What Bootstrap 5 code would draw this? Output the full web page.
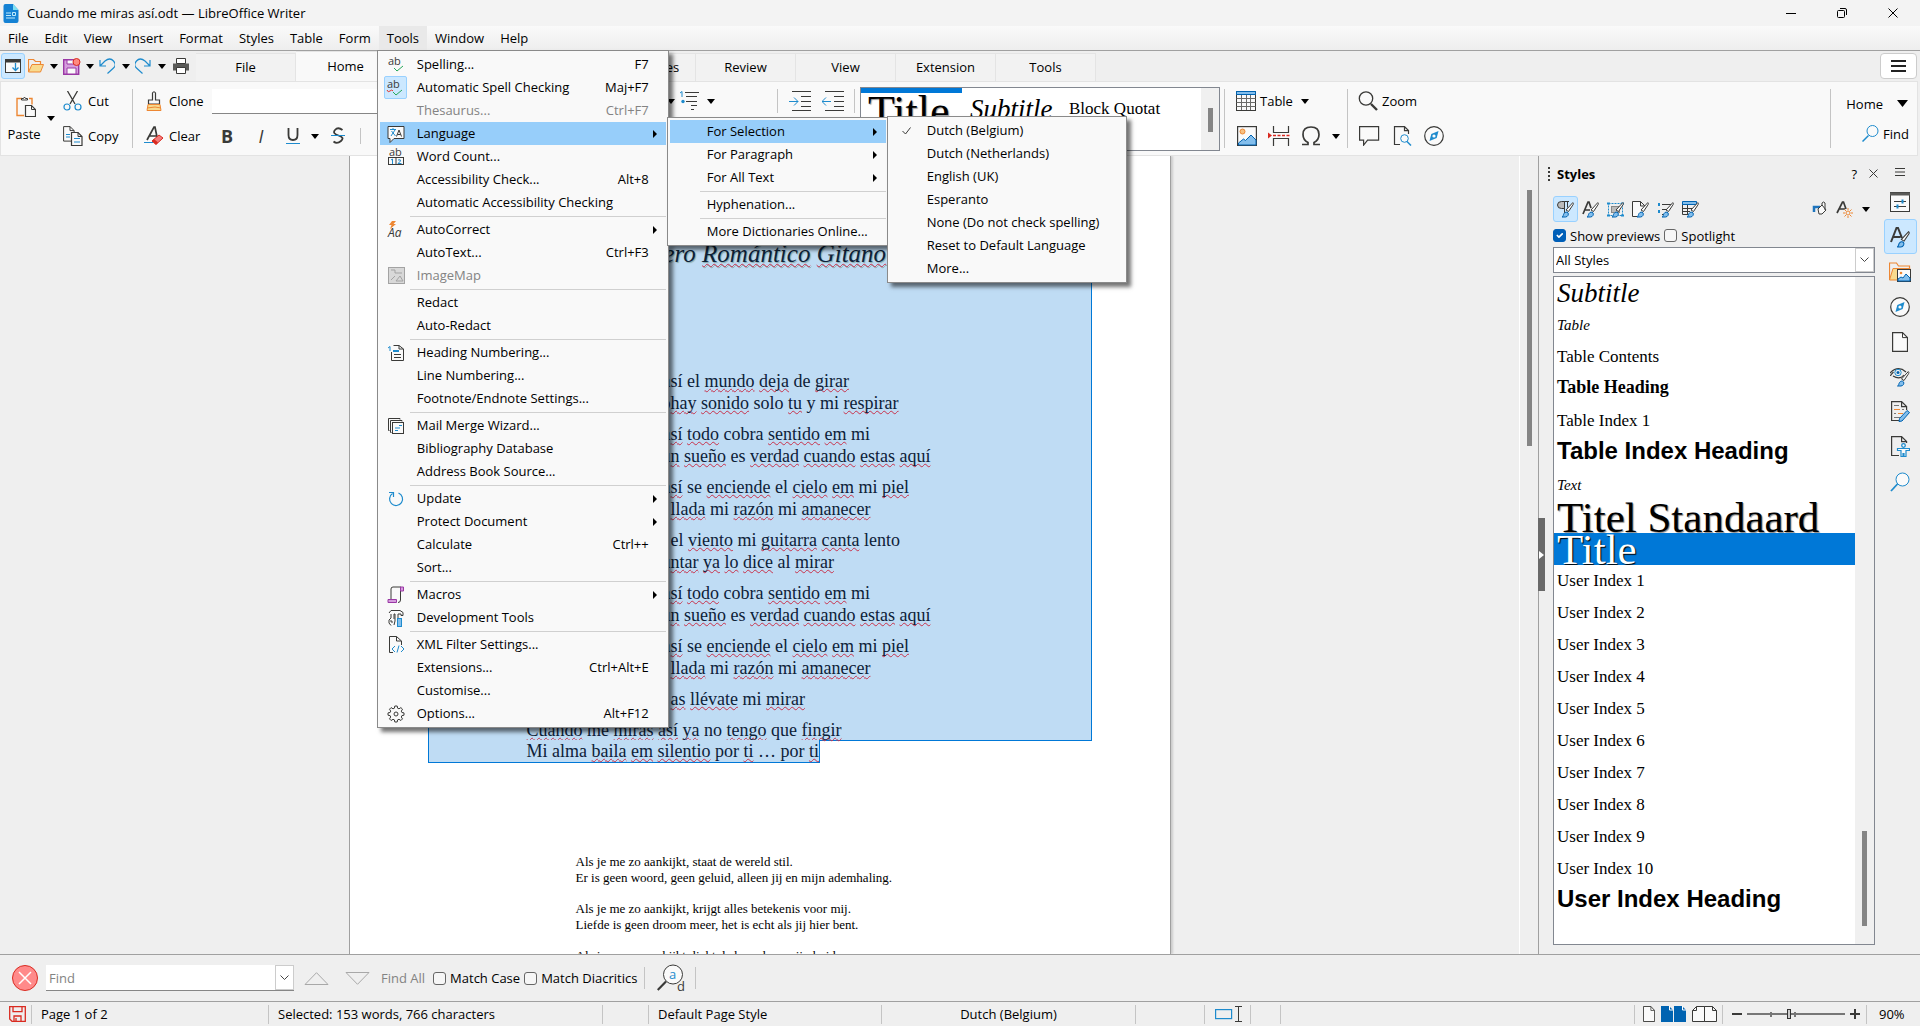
<!DOCTYPE html>
<html lang="en">
<head>
<meta charset="utf-8">
<meta name="viewport" content="width=device-width, initial-scale=1">
<title>Cuando me miras así.odt — LibreOffice Writer</title>
<link href="https://cdn.jsdelivr.net/npm/bootstrap@5.3.0/dist/css/bootstrap.min.css" rel="stylesheet">
<style>
:root{--ink:#3a3a38;--blue:#1e8bcd;--line:#a0a0a0;--face:#efefef;--panel:#f9f9f9;--hot:#cce8ff;--hotline:#99d1ff}
body{font-family:"Open Sans","Noto Sans",sans-serif;font-size:13px;line-height:18px;color:#000;background:var(--face);overflow:hidden}
svg{display:block;flex:none;fill:none;stroke:var(--ink)}
.b{stroke:var(--blue)}.o{stroke:#ed8733}.r{stroke:#d92a20}
.fb{fill:#83beec}.fw{fill:#fafafa}
.serif{font-family:"Liberation Serif",serif}
button{border:0;background:none;padding:0;color:inherit;font:inherit;display:inline-flex;align-items:center}
button:disabled{color:#838383}
.titlebar,.menubar,.tabbar,.ribbon,.findbar,.statusbar{flex-shrink:0}
/* title and menu bar */
.titlebar{height:26px;background:#f3f3f3;padding:0 2px 0 3px}
.titlebar .winbtn{width:51px;height:24px;justify-content:center}
.menubar{height:25px;background:linear-gradient(#fafafa,#eee);border-bottom:1px solid var(--line);z-index:20}
.menubar .nav-link{padding:0 8px;line-height:24px;color:#000}
.menubar .open{background:#e9e9e9}
.dropdown-menu{--bs-dropdown-bg:#f9f9f9;border:1px solid #8a8a8a;border-radius:0;padding:2px;margin:0;font-size:13px;color:#000;box-shadow:4px 4px 4px rgba(0,0,0,.55)}
.dropdown-item{height:23px;line-height:23px;padding:0 17px 0 4px;display:flex;align-items:center;color:#000}
.dropdown-item.hot,.dropdown-item.hot:hover{background:#97cefa}
.dropdown-item:disabled{color:#838383}
.dropdown-item .mi{width:25px;height:23px;margin-right:8px;display:flex;align-items:center;justify-content:center;flex:none}
.dropdown-item .mi.on{width:23px;margin-right:10px;background:var(--hot);border:1px solid var(--hotline);border-radius:2px}
.dropdown-item .key{margin-left:auto}
.dropdown-item .arr{margin-left:auto;margin-right:-8px}
.dropdown-divider{margin:2px 0 1px 30px;border-color:#d0d0d0;opacity:1}
.menu-tools{width:292px;left:-2px}
.menu-lang{width:222px;left:287px;top:-5px}
.menu-sel{width:240px;left:217px;top:-4px}
/* tabs */
.tabbar{height:30px;padding-right:3px}
.quick{width:196px;height:30px;padding-left:1px}
.quick button{height:26px;justify-content:center}
.pressed{background:var(--hot);border:1px solid var(--hotline);border-radius:3px}
.tabcell{width:100px;height:28px;padding-bottom:2px;justify-content:center;background:#f2f2f2;border:1px solid #e4e4e4;border-width:1px 1px 0 0}
.tabcell.on{background:var(--panel);height:30px}
.burger{width:37px;height:26px;justify-content:center;background:#fff;border:1px solid #ccc;border-radius:4px}
/* ribbon */
.ribbon{height:75px;background:var(--panel);border:1px solid #e3e3e3;margin-right:2px}
.grp{height:59px;display:flex;flex-direction:column;justify-content:space-between}
.grp>div{height:24px;display:flex;align-items:center}
.duo button{padding-left:3px;gap:5px}
.vbar{width:1px;background:#c4c4c4;flex:none;align-self:stretch}
.vbar.tall{height:59px;align-self:center}
.fontbox{width:190px;height:25px;border:0;border-bottom:1px solid #868686;border-radius:0;background:#fff;padding:0 4px}
.glyph{font-size:18px;width:16px;justify-content:center;color:var(--ink)}
.gallery{width:360px;height:64px;background:#fff;border:1px solid #828790}
.gallery button{display:flex;align-items:flex-start;height:62px;overflow:hidden;white-space:nowrap}
.gal-title{width:101px;border-top:5px solid #0078d7;font-size:44px;line-height:38px;text-shadow:1px 1px 1px #999;padding-left:7px}
.gal-sub{width:99px;font-size:27px;font-style:italic;line-height:42px;padding-left:8px}
.gal-quote{width:100px;font-size:17px;line-height:42px;padding-left:8px}
.gal-scroll{width:18px;background:#f0f0f0;padding:20px 0 0 7px}
.thumb{width:5px;background:#858585}
/* document */
.work{min-height:0;flex:1 1 0}
.page{width:822px;background:#fff;border:1px solid #a0a0a0;border-width:0 1px;box-shadow:2px 0 2px #ccc}
.sel-main{margin:0 78px;height:585px;background:#bfdcf4;border:1px solid #0078d7;border-top:0}
.sel-tail{margin:-1px 0 0 78px;background:#bfdcf4;border:1px solid #0078d7;border-top:0;width:fit-content;position:relative}
.verse{font-size:18px;line-height:22px;padding-left:98px;white-space:nowrap;color:#0d2138}
.verse p{margin:0 0 9px}
.verse p:last-child{margin:0}
.headline{font-size:25px;font-style:italic;line-height:30px;padding:83px 0 0 98px;white-space:nowrap;color:#0d2138;text-shadow:1px 1px 1px #8aa}
.cut{display:inline-flex;justify-content:flex-end;width:144px}
.headline .cut{width:148px}
.verse u,.headline u{text-decoration:underline wavy #c8324b 1px;text-underline-offset:1px;text-decoration-skip-ink:none}
.dutch{font-size:13px;line-height:16px;padding:91px 0 0 226px;white-space:nowrap}
.dutch p{margin:0 0 15px}
.docscroll{width:19px;border-left:1px solid #fff;padding:34px 0 0 7px}
/* sidebar */
.splitter{width:7px;border-left:1px solid var(--line)}
.splitter button{width:7px;height:73px;margin:362px 0 0 -1px;background:#696969;justify-content:center}
.deck{width:322px;margin:0 8px 9px 8px}
.deckhead{height:37px;padding-bottom:2px}
.deckbar{height:31px;padding-top:1px}
.deckbar button{width:25px;height:26px;justify-content:center}
.form-check{min-height:0;padding:0;margin:0;display:flex;align-items:center}
.form-check .form-check-input{width:13px;height:13px;margin:0 4px 0 0;border:1px solid #666;border-radius:3px;float:none;background-color:#f6f6f6}
.form-check .form-check-input:checked{background-color:#005fb8;border-color:#005fb8}
.stylefilter{height:26px;border:1px solid #828790;background:#fff}
.stylefilter select{appearance:none;border:0;background:none;font:inherit;padding:0 2px;width:100%;color:#000}
.dropbtn{width:19px;background:#fff;border:1px solid #ccc;display:flex;align-items:center;justify-content:center}
.stylelist{margin-top:3px;border:1px solid #828790;background:#fff}
.stylelist .list-group-item{height:32px;line-height:32px;border:0;padding:0 0 0 3px;font-size:17px;color:#000;background:none;overflow:hidden;white-space:nowrap}
.stylelist .s-sub{font-size:27px;font-style:italic}
.stylelist .s-it{font-size:15px;font-style:italic}
.stylelist .s-bold{font-size:18px;font-weight:bold;line-height:28px}
.stylelist .s-head{font-family:"Liberation Sans",sans-serif;font-size:24px;font-weight:bold;line-height:28px}
.stylelist .s-big{font-size:43px;line-height:33px;text-shadow:1px 1px 1px #888}
.stylelist .s-active{background:#0078d7;color:#fff;text-shadow:1px 1px 1px #000}
.liststrip{width:19px;background:#f0f0f0;padding:554px 0 0 7px}
.sidetabs{width:37px;padding-right:3px}
.sidetabs button{width:33px;height:35px;flex:none;justify-content:center}
.sidetabs button.first{height:28px;padding-top:4px}
/* find and status bars */
.findbar{height:47px;border-top:1px solid var(--line);padding-left:12px}
.findbox{width:248px;height:26px;background:#fff;border-bottom:1px solid #868686}
.findbox input{border:0;background:none;padding:0 3px;width:229px;font:inherit}
.findbox input::placeholder{color:#838383;opacity:1}
.findsep{width:1px;height:22px;background:#c4c4c4}
.statusbar{height:25px;border-top:1px solid var(--line)}
.cell{height:19px;border-right:1px solid #c4c4c4;padding-left:9px;display:flex;align-items:center;flex:none;white-space:nowrap}
.zoomer{width:98px;height:14px;margin:0 5px}
.zoomer input{appearance:none;width:98px;height:14px;margin:0;background:linear-gradient(#777,#777) 0 6px/100% 2px no-repeat,linear-gradient(#777,#777) 23px 5px/2px 5px no-repeat,linear-gradient(#777,#777) 47px 5px/2px 5px no-repeat;display:block}
.zoomer input::-webkit-slider-thumb{appearance:none;width:4px;height:10px;background:#ccc;border:1px solid #333}
</style>
</head>
<body class="vh-100 d-flex flex-column">
<svg width="0" height="0" class="position-absolute" aria-hidden="true">
  <symbol id="caret" viewBox="0 0 8 5"><path d="M0 0h8L4 5z" fill="#000" stroke="none"/></symbol>
  <symbol id="right" viewBox="0 0 4 8"><path d="M0 0l4 4-4 4z" fill="#000" stroke="none"/></symbol>
  <symbol id="brush" viewBox="0 0 12 16"><path d="M11.300 .6c.8.500.7 1.500 0 2.500L7 9.500 4.500 8z" fill="#fafafa" stroke="#3a3a38"/><path d="M.5 15c1.500-.5 1-2 2-3.500s3-2 4-.6-.2 4-2.500 4.100z" fill="#83beec" stroke="#0063b1"/></symbol>
  <symbol id="glass" viewBox="0 0 20 20"><circle cx="12.500" cy="7.500" r="6.500" stroke="#1e8bcd" fill="#fafafa"/><path d="M7.500 12L1 19" stroke="#1e8bcd" stroke-width="1.800"/></symbol>
  <symbol id="compass" viewBox="0 0 20 20"><circle cx="10" cy="10" r="9.300" fill="#fafafa" stroke="#3a3a38" stroke-width="1.200"/><path d="M14.500 5l-1.800 7-7.200 3 1.800-7z" fill="#1e8bcd" stroke="none"/><circle cx="10" cy="10" r="1.600" fill="#fafafa" stroke="none"/></symbol>
  <symbol id="sheet" viewBox="0 0 16 20"><path d="M.6.6h9.900l5 5v13.800H.6z" fill="#fafafa" stroke="#3a3a38" stroke-width="1.200"/><path d="M10.500.6v5h5" stroke="#3a3a38" fill="none"/></symbol>
  <symbol id="chev" viewBox="0 0 9 6"><path d="M.5.5l4 4 4-4" stroke="#444" fill="none"/></symbol>
</svg>

<header class="titlebar d-flex align-items-center">
  <svg width="16" height="19" viewBox="0 0 16 19"><path d="M2.500 0H10l5.500 6v11a2 2 0 0 1-2 2h-11a2 2 0 0 1-2-2V2a2 2 0 0 1 2-2z" fill="#1582d4" stroke="none"/><path d="M10 0l5.500 6H10z" fill="#7fe0f2" stroke="none"/><path d="M3 9h5M3 11.500h5M3 14h9" stroke="#bfe9fb"/><path d="M9.500 8.500h3v3h-3z" stroke="#bfe9fb"/></svg>
  <span class="ms-2">Cuando me miras así.odt — LibreOffice Writer</span>
  <div class="ms-auto d-flex">
    <button class="winbtn" aria-label="Minimize"><svg width="10" height="10"><path d="M0 5.500h10" stroke="#000"/></svg></button>
    <button class="winbtn" aria-label="Restore"><svg width="10" height="10"><rect x=".5" y="2.500" width="7" height="7" rx="1" stroke="#000"/><path d="M3 .5h5a1.500 1.500 0 0 1 1.500 1.500v5" stroke="#000"/></svg></button>
    <button class="winbtn" aria-label="Close"><svg width="10" height="10"><path d="M.5.5l9 9M9.500.5l-9 9" stroke="#000"/></svg></button>
  </div>
</header>

<nav class="menubar nav flex-nowrap position-relative">
  <a class="nav-link" href="#">File</a><a class="nav-link" href="#">Edit</a><a class="nav-link" href="#">View</a><a class="nav-link" href="#">Insert</a><a class="nav-link" href="#">Format</a><a class="nav-link" href="#">Styles</a><a class="nav-link" href="#">Table</a><a class="nav-link" href="#">Form</a>
  <div class="dropdown">
    <a class="nav-link open" href="#">Tools</a>
    <div class="dropdown-menu menu-tools show">
      <button class="dropdown-item"><span class="mi"><svg width="18" height="18"><text x="1" y="9" font-size="11" fill="#3a3a38" stroke="none">ab</text><path d="M7 12l3 3 6-5" stroke="#27a85a"/></svg></span>Spelling...<span class="key">F7</span></button>
      <button class="dropdown-item"><span class="mi on"><svg width="18" height="18"><text x="1" y="9" font-size="11" fill="#3a3a38" stroke="none">ab</text><path d="M7 13l3 3 6-5" stroke="#27a85a"/><path d="M1 11q1 3 3 1t3 0" stroke="#e0352b"/></svg></span>Automatic Spell Checking<span class="key">Maj+F7</span></button>
      <button class="dropdown-item" disabled><span class="mi"></span>Thesaurus...<span class="key">Ctrl+F7</span></button>
      <div class="position-relative">
        <button class="dropdown-item hot"><span class="mi"><svg width="18" height="18"><path d="M1 1.500h16v12H7l-4 4v-4H1z" class="fw"/><path d="M3 4.500h6M6 3v1.500M4 11l4-6M4.500 6l4 5" class="b"/><path d="M9.500 11.500l2.500-6.500 2.500 6.500M10.500 9.500h3"/></svg></span>Language<span class="arr"><svg width="4" height="8"><use href="#right"/></svg></span></button>
        <div class="dropdown-menu menu-lang show">
          <div class="position-relative">
            <button class="dropdown-item hot"><span class="mi"></span>For Selection<span class="arr"><svg width="4" height="8"><use href="#right"/></svg></span></button>
            <div class="dropdown-menu menu-sel show">
              <button class="dropdown-item"><span class="mi"><svg width="9" height="8"><path d="M.5 4l3 3L8.500.5"/></svg></span>Dutch (Belgium)</button>
              <button class="dropdown-item"><span class="mi"></span>Dutch (Netherlands)</button>
              <button class="dropdown-item"><span class="mi"></span>English (UK)</button>
              <button class="dropdown-item"><span class="mi"></span>Esperanto</button>
              <button class="dropdown-item"><span class="mi"></span>None (Do not check spelling)</button>
              <button class="dropdown-item"><span class="mi"></span>Reset to Default Language</button>
              <button class="dropdown-item"><span class="mi"></span>More...</button>
            </div>
          </div>
          <button class="dropdown-item"><span class="mi"></span>For Paragraph<span class="arr"><svg width="4" height="8"><use href="#right"/></svg></span></button>
          <button class="dropdown-item"><span class="mi"></span>For All Text<span class="arr"><svg width="4" height="8"><use href="#right"/></svg></span></button>
          <hr class="dropdown-divider">
          <button class="dropdown-item"><span class="mi"></span>Hyphenation...</button>
          <hr class="dropdown-divider">
          <button class="dropdown-item"><span class="mi"></span>More Dictionaries Online...</button>
        </div>
      </div>
      <button class="dropdown-item"><span class="mi"><svg width="18" height="18"><text x="2" y="8" font-size="11" fill="#3a3a38" stroke="none">ab</text><rect x="1.500" y="9.500" width="15" height="7"/><path d="M9 9.500v7"/><path d="M4 12l1.500-1v5M11 12q3-1 2.500 1L11 15.500h3.500" class="b"/></svg></span>Word Count...</button>
      <button class="dropdown-item"><span class="mi"></span>Accessibility Check...<span class="key">Alt+8</span></button>
      <button class="dropdown-item"><span class="mi"></span>Automatic Accessibility Checking</button>
      <hr class="dropdown-divider">
      <button class="dropdown-item"><span class="mi"><svg width="18" height="18"><text x="1" y="16" font-size="12" font-style="italic" fill="#3a3a38" stroke="none">Aa</text><path d="M5 0h4L6.500 3H9L3 8l1.500-4H2z" fill="#ed8733" stroke="none"/></svg></span>AutoCorrect<span class="arr"><svg width="4" height="8"><use href="#right"/></svg></span></button>
      <button class="dropdown-item"><span class="mi"></span>AutoText...<span class="key">Ctrl+F3</span></button>
      <button class="dropdown-item" disabled><span class="mi"><svg width="17" height="17"><rect x=".5" y=".5" width="16" height="16" fill="#d8d8d8" stroke="#a3a3a3"/><path d="M3 3h4v3h7M3 13l4-4M8 14l4-5 3 5z" stroke="#a3a3a3"/></svg></span>ImageMap</button>
      <hr class="dropdown-divider">
      <button class="dropdown-item"><span class="mi"></span>Redact</button>
      <button class="dropdown-item"><span class="mi"></span>Auto-Redact</button>
      <hr class="dropdown-divider">
      <button class="dropdown-item"><span class="mi"><svg width="18" height="18"><path d="M4.500 8v8.500h12V5L12 1.500H6.500"/><path d="M12 1.500V5h4.500M7 10.500h7M7 13.500h7"/><path d="M6 7h6" class="b" stroke-width="2"/><path d="M1 4l2-1.500V7" class="b"/></svg></span>Heading Numbering...</button>
      <button class="dropdown-item"><span class="mi"></span>Line Numbering...</button>
      <button class="dropdown-item"><span class="mi"></span>Footnote/Endnote Settings...</button>
      <hr class="dropdown-divider">
      <button class="dropdown-item"><span class="mi"><svg width="18" height="18"><path d="M13 2.500V1.500H1.500v12h1M15 4.500V3.500H3.500v12h1"/><rect x="5.500" y="5.500" width="11" height="11" class="fw"/><path d="M8 11h5M8 13.500h3M12 8.500h3" class="b"/></svg></span>Mail Merge Wizard...</button>
      <button class="dropdown-item"><span class="mi"></span>Bibliography Database</button>
      <button class="dropdown-item"><span class="mi"></span>Address Book Source...</button>
      <hr class="dropdown-divider">
      <button class="dropdown-item"><span class="mi"><svg width="16" height="16"><path d="M10.500 2a6.500 6.500 0 1 1-6 .6M1 1.500h4.500V6" class="b" stroke-width="1.200"/></svg></span>Update<span class="arr"><svg width="4" height="8"><use href="#right"/></svg></span></button>
      <button class="dropdown-item"><span class="mi"></span>Protect Document<span class="arr"><svg width="4" height="8"><use href="#right"/></svg></span></button>
      <button class="dropdown-item"><span class="mi"></span>Calculate<span class="key">Ctrl++</span></button>
      <button class="dropdown-item"><span class="mi"></span>Sort...</button>
      <hr class="dropdown-divider">
      <button class="dropdown-item"><span class="mi"><svg width="18" height="18"><path d="M4 13V3q0-2 2-2h8M13.500 3v11q0 2.500-2.500 2.500"/><path d="M13.500 1h3v4h-3zM1 13.500h8.500v3H1z" fill="#d59ddd" stroke="#9a38a5"/></svg></span>Macros<span class="arr"><svg width="4" height="8"><use href="#right"/></svg></span></button>
      <button class="dropdown-item"><span class="mi"><svg width="18" height="18"><path d="M2 4l2-2.500h9l3 2v3h-2V5h-3v4M7 5v5M4 5v4l-2 2v3l2 2.500M7 5h1v7l-1 4M4 11v2h2"/><rect x="10.500" y="9.500" width="4" height="8" class="fb b"/></svg></span>Development Tools</button>
      <hr class="dropdown-divider">
      <button class="dropdown-item"><span class="mi"><svg width="18" height="18"><path d="M6 16.500H2.500v-16h7L14.500 5v4M9.500.5V5h5"/><path d="M8 10l-3 3 3 3M14 10l3 3-3 3M12 9.500l-2 7" class="b"/></svg></span>XML Filter Settings...</button>
      <button class="dropdown-item"><span class="mi"></span>Extensions...<span class="key">Ctrl+Alt+E</span></button>
      <button class="dropdown-item"><span class="mi"></span>Customise...</button>
      <button class="dropdown-item"><span class="mi"><svg width="18" height="18"><path d="M7.800 1h2.400l.4 2.200 1.400.6 1.900-1.200 1.600 1.600-1.200 1.900.6 1.400 2.100.4v2.300l-2.100.4-.6 1.400 1.200 1.900-1.600 1.600-1.900-1.200-1.400.6-.4 2.100H7.800l-.4-2.100-1.400-.6-1.900 1.200-1.600-1.600 1.200-1.900-.6-1.400L1 10.200V7.900l2.100-.4.6-1.400-1.200-1.900 1.600-1.600L6 3.800l1.400-.6z"/><circle cx="9" cy="9" r="2"/></svg></span>Options...<span class="key">Alt+F12</span></button>
    </div>
  </div>
  <a class="nav-link" href="#">Window</a><a class="nav-link" href="#">Help</a>
</nav>

<div class="tabbar d-flex align-items-end">
  <div class="quick d-flex align-items-center flex-shrink-0">
    <button class="pressed flex-shrink-0" style="width:24px" aria-label="Toolbar"><svg width="16" height="14"><rect x=".5" y=".5" width="15" height="13" class="fw"/><path d="M0 2h16" stroke-width="3"/><path d="M10.500 4v7M7.500 8.500l3 3 3-3" class="b" stroke-width="1.300"/></svg></button>
    <button style="margin:0 6px 0 3px" aria-label="Open"><svg width="16" height="14"><path d="M.5 13V.5h5l2 2h5V6" class="o" stroke-width="1.200"/><path d="M.5 13L4 5.500h11.500L12.500 13z" fill="#f8db8f" class="o"/></svg></button>
    <button aria-label="Open menu"><svg width="8" height="5"><use href="#caret"/></svg></button>
    <button style="margin:0 5px" aria-label="Save"><svg width="18" height="17"><path d="M.7 1.700h12l3 3v11.600h-15z" fill="#d59ddd" stroke="#9a38a5" stroke-width="1.400"/><path d="M4 2h7v4H4zM4 10h9v6H4z" class="fw" stroke="#9a38a5"/><circle cx="13.500" cy="4" r="3.500" fill="#ff8a80" class="r"/></svg></button>
    <button aria-label="Save menu"><svg width="8" height="5"><use href="#caret"/></svg></button>
    <button style="margin:0 7px 0 5px" aria-label="Undo"><svg width="16" height="16"><path d="M1 2v6h6M1 8l5-5q5-4 8.500 0t0 7L8.500 15.500" class="b" stroke-width="1.200"/></svg></button>
    <button aria-label="Undo menu"><svg width="8" height="5"><use href="#caret"/></svg></button>
    <button style="margin:0 7px 0 5px" aria-label="Redo"><svg width="16" height="16"><path d="M15 2v6H9M15 8l-5-5Q5-1 1.500 3t0 7l6 5.500" class="b" stroke-width="1.200"/></svg></button>
    <button aria-label="Redo menu"><svg width="8" height="5"><use href="#caret"/></svg></button>
    <button style="margin-left:7px" aria-label="Print"><svg width="16" height="16"><path d="M0 5.500h16v7H0z" fill="#5a5a58" stroke="none"/><path d="M3.500.5h9v5h-9zM3.500 9.500h9v6h-9z" fill="#fff"/></svg></button>
  </div>
  <button class="tabcell">File</button><button class="tabcell on">Home</button><button class="tabcell">Insert</button><button class="tabcell">Layout</button><button class="tabcell">References</button><button class="tabcell">Review</button><button class="tabcell">View</button><button class="tabcell">Extension</button><button class="tabcell">Tools</button>
  <button class="burger ms-auto align-self-center" aria-label="Menu"><svg width="15" height="12"><path d="M0 1h15M0 6h15M0 11h15" stroke-width="2" stroke="#222"/></svg></button>
</div>

<div class="ribbon d-flex align-items-center">
  <div class="d-flex align-items-center" style="width:59px">
    <button class="flex-column" style="width:46px"><svg width="20" height="22" class="ms-1"><path d="M6 3.500H1v17h7M13 3.500h3v6" class="o" stroke-width="1.400"/><path d="M5.500 5V3.500h2q1-3 2 0h2V5z"/><path d="M9.500 10.500h6l4 4v7h-10z" class="fw" stroke-width="1.200"/><path d="M15.500 10.500v4h4"/></svg><span class="mt-2">Paste</span></button>
    <button aria-label="Paste menu"><svg width="8" height="5"><use href="#caret"/></svg></button>
  </div>
  <div class="grp duo" style="width:72px">
    <div><button><svg width="20" height="20"><path d="M4.500 0L12 13M14.500 0L7 13" stroke-width="1.300"/><circle cx="4" cy="16" r="3" class="b" stroke-width="1.200"/><circle cx="15" cy="16" r="3" class="b" stroke-width="1.200"/></svg>Cut</button></div>
    <div><button><svg width="20" height="20"><path d="M.6.600h6.500l4 4v10.500H.6zM7 .6v4h4" class="fw"/><path d="M8.500 6.500h6.500l4 4v9h-10.500z" class="fw" stroke-width="1.200"/><path d="M15 6.500v4h4"/><path d="M3 8.500h4M3 11h4M11 12.500h6M11 16h6" class="b"/></svg>Copy</button></div>
  </div>
  <div class="vbar tall"></div>
  <div class="grp duo ps-2" style="width:79px">
    <div><button><svg width="20" height="20"><path d="M8.500 9V2q1.500-2.500 3 0v7h4v4h-11V9z" class="fw" stroke-width="1.200"/><path d="M4 13.500L3 19.500h14l-1-6z" fill="#f8db8f" class="o"/><path d="M3 17l8-1 6 1" class="o"/></svg>Clone</button></div>
    <div><button><svg width="20" height="20"><path d="M3 14L10 1h1l2 10M5 10h8" stroke-width="1.700"/><path d="M0 16.500h9" class="b"/><path d="M8 15l7-6 4 3-7 6.500z" fill="#f37c7c" class="r"/><path d="M8 15l2-2 4 3.500-2 2z" fill="#d92a20" stroke="none"/></svg>Clear</button></div>
  </div>
  <div class="grp" style="width:565px">
    <div><input class="fontbox" type="text" aria-label="Font name">
      <button class="ms-auto" aria-label="List menu"><svg width="8" height="5"><use href="#caret"/></svg></button>
      <button class="ms-1" aria-label="Outline"><svg width="20" height="20" ><path d="M6 1.500h14M7 5.500h11M7 10.500h11M12 14.500h6M12 18.500h3"/><path d="M1 2l2-1.500V6" class="b"/><circle cx="4" cy="10.500" r="1.700" fill="#1e8bcd" stroke="none"/></svg></button>
      <button class="ms-2" style="margin-right:62px" aria-label="Outline menu"><svg width="8" height="5"><use href="#caret"/></svg></button></div>
    <div style="padding-left:7px"><button class="glyph"><b>B</b></button><button class="glyph" style="margin:0 17px 0 18px"><i>I</i></button><button aria-label="Underline"><svg width="14" height="18"><path d="M2.500 1v7q0 5 4.500 5t4.500-5V1" stroke-width="1.800"/><path d="M0 16.500h14" class="b"/></svg></button><button style="margin:0 12px 0 11px" aria-label="Underline menu"><svg width="8" height="5"><use href="#caret"/></svg></button><button style="margin-right:15px" aria-label="Strikethrough"><svg width="14" height="18"><path d="M11.500 3Q7-.5 4 3t3.500 5.500T10 14t-7.500.5" stroke-width="1.800"/><path d="M0 8.500h14" class="b"/></svg></button><span class="vbar my-1"></span></div>
  </div>
  <div class="grp" style="width:83px">
    <div><span class="vbar"></span><button style="margin-left:11px" aria-label="Increase indent"><svg width="22" height="20"><path d="M3 .5h19M12 5.500h10M12 10.500h10M12 15.500h10M3 19.500h19"/><path d="M0 10.500h9M5 6.500l4 4-4 4" class="b"/></svg></button><button style="margin:0 10px 0 11px" aria-label="Decrease indent"><svg width="22" height="20"><path d="M3 .5h19M12 5.500h10M12 10.500h10M12 15.500h10M3 19.500h19"/><path d="M0 10.500h9M4 6.500l-4 4 4 4" class="b"/></svg></button><span class="vbar"></span></div>
  </div>
  <div class="gallery d-flex serif flex-shrink-0">
    <button class="gal-title">Title</button><button class="gal-sub">Subtitle</button><button class="gal-quote">Block Quotat</button>
    <div class="gal-scroll ms-auto"><div class="thumb" style="height:24px"></div></div>
  </div>
  <div class="vbar tall ms-1"></div>
  <div class="grp" style="width:122px;padding-left:11px">
    <div><button><svg width="20" height="20" class="me-1"><rect x=".5" y=".5" width="19" height="19" class="fw"/><path d="M.5 7.500h19M.5 11.500h19M.5 15.500h19M5.500 4v15M10.500 4v15M14.500 4v15" stroke="#6b6b69"/><path d="M.5.500h19v3H.5z" fill="#83beec" stroke="#0063b1"/></svg>Table</button><button class="ms-2" aria-label="Table menu"><svg width="8" height="5"><use href="#caret"/></svg></button></div>
    <div><button style="margin:0 11px 0 1px" aria-label="Image"><svg width="20" height="20"><rect x=".6" y=".6" width="18.800" height="18.800" class="fw" stroke-width="1.200"/><circle cx="5.500" cy="5.500" r="2.500" fill="#f8c07f" class="o"/><path d="M1.500 19v-2l5-4 2 1.500L14 9l5 5v5z" class="fb" stroke="#0063b1"/></svg></button><button aria-label="Page break"><svg width="22" height="20"><path d="M5.500 0v6.500h15V0M5.500 20v-7.500h15V20" stroke-width="1.200"/><path d="M5 9.500h17" class="r" stroke-dasharray="3 1.500" stroke-width="1.400"/><path d="M0 6.500l4 3-4 3z" fill="#d92a20" stroke="none"/></svg></button><button style="margin:0 11px" aria-label="Symbol"><svg width="20" height="20"><path d="M1 18.500h6v-2Q2 14 2 8.500 2 1 10 1t8 7.500q0 5.500-5 8v2h6" stroke-width="1.700"/></svg></button><button aria-label="Symbol menu"><svg width="8" height="5"><use href="#caret"/></svg></button></div>
  </div>
  <div class="vbar tall"></div>
  <div class="grp" style="padding-left:10px">
    <div><button><svg width="20" height="20" class="me-1"><circle cx="8" cy="7.500" r="6.700" class="fw" stroke-width="1.300"/><path d="M13 13l6 6" stroke-width="2.400"/></svg>Zoom</button></div>
    <div class="gap-2"><button class="me-1" aria-label="Comment"><svg width="22" height="20"><path d="M1.600.600h19v13.500h-11l-4 5v-5h-4z" class="fw" stroke-width="1.200"/></svg></button><button class="me-1" aria-label="Find in document"><svg width="20" height="20"><path d="M8 18.500H2.500V.6h10l4 4V8M12.500.6v4h4" stroke-width="1.200"/><circle cx="12.500" cy="12.500" r="3.800" class="b fw"/><path d="M15 15.500l4 4" class="b" stroke-width="1.500"/></svg></button><button aria-label="Navigator"><svg width="20" height="20"><use href="#compass"/></svg></button></div>
  </div>
  <div class="vbar tall ms-auto"></div>
  <div class="d-flex flex-column align-items-end justify-content-center pe-2" style="width:86px;height:59px;gap:12px">
    <button style="padding-right:1px">Home<svg width="11" height="7" viewBox="0 0 8 5" style="margin-left:14px"><use href="#caret"/></svg></button>
    <button><svg width="17" height="17" class="me-1"><circle cx="10.500" cy="6" r="5.500" class="b fw"/><path d="M6.500 10.500L.5 16.500" class="b" stroke-width="1.500"/></svg>Find</button>
  </div>
</div>

<main class="work d-flex overflow-hidden">
  <div class="flex-fill d-flex justify-content-center overflow-hidden">
    <article class="page serif">
      <div class="sel-main">
        <div class="headline"><span class="cut">Géne</span>ro <u>Romántico</u> <u>Gitano</u></div>
        <div class="verse" style="padding-top:101px">
          <p><span class="cut">Cuando me miras a</span>sí el <u>mundo</u> <u>deja</u> de <u>girar</u><br><span class="cut">No </span><u>hay</u> <u>sonido</u> solo <u>tu</u> y mi <u>respirar</u></p>
          <p><span class="cut">Cuando me miras a</span><u>sí</u> <u>todo</u> cobra <u>sentido</u> <u>em</u> mi<br><span class="cut">u</span><u>n</u> <u>sueño</u> es <u>verdad</u> <u>cuando</u> <u>estas</u> <u>aquí</u></p>
          <p><span class="cut">Cuando me miras a</span><u>sí</u> se <u>enciende</u> el <u>cielo</u> <u>em</u> mi <u>piel</u><br><span class="cut"></span><u>llada</u> mi <u>razón</u> mi <u>amanecer</u></p>
          <p><span class="cut"></span>el <u>viento</u> mi <u>guitarra</u> <u>canta</u> lento<br><span class="cut">u</span><u>ntar</u> <u>ya</u> <u>lo</u> <u>dice</u> al <u>mirar</u></p>
          <p><span class="cut">Cuando me miras a</span><u>sí</u> <u>todo</u> cobra <u>sentido</u> <u>em</u> mi<br><span class="cut">u</span><u>n</u> <u>sueño</u> es <u>verdad</u> <u>cuando</u> <u>estas</u> <u>aquí</u></p>
          <p><span class="cut">Cuando me miras a</span><u>sí</u> se <u>enciende</u> el <u>cielo</u> <u>em</u> mi <u>piel</u><br><span class="cut"></span><u>llada</u> mi <u>razón</u> mi <u>amanecer</u></p>
          <p><span class="cut"></span><u>as</u> <u>llévate</u> mi <u>mirar</u></p>
          <p><u>Cuando</u> me <u>miras</u> <u>así</u> <u>ya</u> no <u>tengo</u> que <u>fingir</u></p>
        </div>
      </div>
      <div class="sel-tail verse">Mi alma <u>baila</u> <u>em</u> <u>silentio</u> por <u>ti</u> … por <u>ti</u></div>
      <div class="dutch">
        <p>Als je me zo aankijkt, staat de wereld stil.<br>Er is geen woord, geen geluid, alleen jij en mijn ademhaling.</p>
        <p>Als je me zo aankijkt, krijgt alles betekenis voor mij.<br>Liefde is geen droom meer, het is echt als jij hier bent.</p>
        <p>Als je me zo aankijkt, licht de hemel op mijn huid op</p>
      </div>
    </article>
  </div>
  <div class="docscroll"><div class="thumb" style="height:256px"></div></div>
  <div class="splitter"><button aria-label="Hide sidebar"><svg width="5" height="8"><path d="M0 0l5 4-5 4z" fill="#fff" stroke="none"/></svg></button></div>
  <aside class="deck d-flex flex-column">
    <div class="deckhead d-flex align-items-center">
      <svg width="2" height="14" style="margin:0 7px 0 -5px"><path d="M1 0v14" stroke-width="2" stroke-dasharray="2 2"/></svg><b>Styles</b>
      <button class="ms-auto" aria-label="Help">?</button><button style="margin:0 -3px 0 12px" aria-label="Close deck"><svg width="9" height="9"><path d="M.5.5l8 8M8.500.5l-8 8"/></svg></button>
    </div>
    <div class="deckbar d-flex align-items-center">
      <button class="pressed" aria-label="Paragraph styles"><svg width="17" height="17"><path d="M7 .5h5M7.500 .5V13M10.500.5v6"/><path d="M7.500.5h-3q-4 0-4 3.500t4 3.500h3z" fill="#bbb"/><use href="#brush" x="4" y="1" width="13" height="16"/></svg></button>
      <button aria-label="Character styles"><svg width="17" height="17"><path d="M1 13L6 1h1l2 6M3 9h5" stroke-width="1.700"/><use href="#brush" x="4" y="1" width="13" height="16"/></svg></button>
      <button aria-label="Frame styles"><svg width="17" height="17"><rect x="1.500" y="2.500" width="14" height="12" stroke-dasharray="2 1" class="b"/><rect x="4.500" y="5.500" width="8" height="6" fill="#bbb" stroke="#888"/><path d="M0 2.500h3M14 2.500h3M0 14.500h3M14 14.500h3" class="b" stroke-width="2"/><use href="#brush" x="4" y="1" width="13" height="16"/></svg></button>
      <button aria-label="Page styles"><svg width="17" height="17"><path d="M5 15.500H.5V.5h8L13 5M8.500.5V5H12" class="fw"/><use href="#brush" x="4" y="1" width="13" height="16"/></svg></button>
      <button aria-label="List styles"><svg width="17" height="17"><path d="M5 3.500h10M5 8.500h6M5 13.500h2"/><path d="M1 3.500h2M1 10.500h2" class="b" stroke-width="3"/><use href="#brush" x="4" y="1" width="13" height="16"/></svg></button>
      <button aria-label="Table styles"><svg width="17" height="17"><path d="M.5 3v10.500H8M.5 7.500H10M.5 10.500H8M5.500 4v9"/><path d="M.5.500h14v3H.5z" class="fb" stroke="#0063b1"/><use href="#brush" x="4" y="1" width="13" height="16"/></svg></button>
      <button class="ms-auto" aria-label="Fill format"><svg width="17" height="17"><path d="M3 11V6h6" stroke="#1e74bd" stroke-width="2.500"/><path d="M7 8l4-4 4 5-4 4H8zM11 5V2q1.500-2 3 0v7" class="fw"/></svg></button>
      <button aria-label="New style"><svg width="17" height="17"><path d="M1 12L6.500 1h1L10 8M3 8h6" stroke-width="1.700"/><circle cx="12" cy="12" r="2" class="o"/><path d="M12 7v2M12 15v2M7 12h2M15 12h2M8.500 8.500L10 10M14 14l1.500 1.500M15.500 8.500L14 10M8.500 15.500L10 14" class="o"/></svg></button>
      <button style="width:18px" aria-label="New style menu"><svg width="8" height="5"><use href="#caret"/></svg></button>
    </div>
    <div class="d-flex align-items-center" style="height:23px">
      <div class="form-check"><input class="form-check-input" type="checkbox" id="prev" checked><label for="prev">Show previews</label></div>
      <div class="form-check ms-1"><input class="form-check-input" type="checkbox" id="spot"><label for="spot">Spotlight</label></div>
    </div>
    <div class="stylefilter d-flex"><select aria-label="Style filter"><option>All Styles</option></select><span class="dropbtn flex-shrink-0"><svg width="9" height="6"><use href="#chev"/></svg></span></div>
    <div class="stylelist d-flex flex-fill overflow-hidden">
      <div class="list-group list-group-flush serif flex-fill">
        <a href="#" class="list-group-item s-sub">Subtitle</a>
        <a href="#" class="list-group-item s-it">Table</a>
        <a href="#" class="list-group-item">Table Contents</a>
        <a href="#" class="list-group-item s-bold">Table Heading</a>
        <a href="#" class="list-group-item">Table Index 1</a>
        <a href="#" class="list-group-item s-head">Table Index Heading</a>
        <a href="#" class="list-group-item s-it">Text</a>
        <a href="#" class="list-group-item s-big">Titel Standaard</a>
        <a href="#" class="list-group-item s-big s-active">Title</a>
        <a href="#" class="list-group-item">User Index 1</a>
        <a href="#" class="list-group-item">User Index 2</a>
        <a href="#" class="list-group-item">User Index 3</a>
        <a href="#" class="list-group-item">User Index 4</a>
        <a href="#" class="list-group-item">User Index 5</a>
        <a href="#" class="list-group-item">User Index 6</a>
        <a href="#" class="list-group-item">User Index 7</a>
        <a href="#" class="list-group-item">User Index 8</a>
        <a href="#" class="list-group-item">User Index 9</a>
        <a href="#" class="list-group-item">User Index 10</a>
        <a href="#" class="list-group-item s-head">User Index Heading</a>
      </div>
      <div class="liststrip"><div class="thumb" style="height:95px"></div></div>
    </div>
  </aside>
  <div class="sidetabs d-flex flex-column align-items-center">
    <button class="first" aria-label="Sidebar settings"><svg width="10" height="8"><path d="M0 .5h10M0 4h10M0 7.500h10"/></svg></button>
    <button aria-label="Properties"><svg width="20" height="20"><rect x=".5" y=".5" width="19" height="19" class="fw"/><path d="M0 2h20" stroke-width="3" stroke="#5a5a58"/><path d="M4 9.500h12M4 14.500h12"/><path d="M12.500 7.500v4M7.500 12.500v4" class="b" stroke-width="2"/></svg></button>
    <button class="pressed" aria-label="Styles"><svg width="21" height="22"><path d="M1 16L6.500 2h1.500L12 12M3.500 11h7" stroke-width="2"/><use href="#brush" x="5" y="5" width="16" height="17"/></svg></button>
    <button aria-label="Gallery"><svg width="22" height="20"><path d="M.5 18V1h7l2 3h11v3" class="o" stroke-width="1.200"/><path d="M.5 18L4 6.500h17V18z" fill="#f8db8f" class="o"/><rect x="8.500" y="7.500" width="13" height="12" class="fw"/><path d="M9 17l3-2 2 1 3-4 4 4v3H9z" class="fb" stroke="#0063b1"/><circle cx="12" cy="11" r="1.300" fill="#ed8733" stroke="none"/></svg></button>
    <button aria-label="Navigator"><svg width="20" height="20"><use href="#compass"/></svg></button>
    <button aria-label="Page"><svg width="16" height="20"><use href="#sheet"/></svg></button>
    <button aria-label="Style inspector"><svg width="21" height="20"><path d="M0 6q8-8 16-1M3 9q7 4 11-1M3.500 5q-3 3-3 4" stroke-width="1.200"/><circle cx="8" cy="5.500" r="3.200" class="b"/><circle cx="8" cy="5.500" r="1.500" fill="#0063b1" stroke="none"/><use href="#brush" x="5" y="4" width="16" height="16"/></svg></button>
    <button aria-label="Manage changes"><svg width="19" height="21"><path d="M12 19.500H.6V.6h10l5 5V9M10.600.6v5h5" stroke-width="1.200"/><path d="M3 4.500h5M11 8.500h2M3 12.500h2M3 16.500h6" stroke="#777"/><path d="M3 8.500h6M7 12.500h5" class="o"/><path d="M16 9.500l2.500 2L11 20l-3 .5.500-3z" class="fb" stroke="#0063b1"/></svg></button>
    <button aria-label="Accessibility"><svg width="19" height="21"><path d="M8 19.500H.6V.6h10l5 5V7M10.600.6v5h5" stroke-width="1.200"/><circle cx="12.500" cy="9.500" r="1.800" class="b fw" stroke-width="1.300"/><path d="M6.500 12.500h12v2H15v6h-2v-3h-1v3h-2v-6H6.500z" class="b fw" stroke-width="1.200"/></svg></button>
    <button aria-label="Find"><svg width="20" height="20"><use href="#glass"/></svg></button>
  </div>
</main>

<form class="findbar d-flex align-items-center">
  <button type="button" aria-label="Close find bar"><svg width="26" height="26"><circle cx="13" cy="13" r="12.500" fill="#ff8a8a" class="r"/><path d="M7 7l12 12M19 7L7 19" stroke="#fff" stroke-width="1.500"/></svg></button>
  <div class="findbox d-flex ms-2"><input type="text" placeholder="Find" aria-label="Find"><button type="button" class="dropbtn" aria-label="Find history"><svg width="9" height="6"><use href="#chev"/></svg></button></div>
  <button type="button" style="margin-left:10px" aria-label="Previous"><svg width="25" height="13"><path d="M1 12.500L12.500.7 24 12.500z" stroke="#a8a8a8"/></svg></button>
  <button type="button" style="margin:0 11px 0 16px" aria-label="Next"><svg width="25" height="13"><path d="M1 .5h23L12.500 12.300z" stroke="#a8a8a8"/></svg></button>
  <button type="button" disabled>Find All</button>
  <div class="form-check ms-2"><input class="form-check-input" type="checkbox" id="mc"><label for="mc">Match Case</label></div>
  <div class="form-check ms-1"><input class="form-check-input" type="checkbox" id="md"><label for="md">Match Diacritics</label></div>
  <span class="findsep" style="margin:0 12px 0 7px"></span>
  <button type="button" aria-label="Find and replace"><svg width="30" height="28"><circle cx="16" cy="10.500" r="9.500" class="fw"/><path d="M9 17.500L.7 26" stroke-width="2.200"/><text x="12" y="15" font-size="13" fill="#1e8bcd" stroke="none">a</text><text x="20" y="27" font-size="13" fill="#3a3a38" stroke="none">d</text></svg></button>
  <span class="findsep ms-2"></span>
</form>

<footer class="statusbar d-flex align-items-center">
  <div class="cell" style="width:32px"><svg width="17" height="16"><path d="M.7.700h15.600v14.600H3L.7 13zM4 .7h9v5H4zM5 15v-5h7v5M7 12v3" class="r" stroke-width="1.300"/></svg></div>
  <div class="cell" style="width:237px">Page 1 of 2</div>
  <div class="cell" style="width:334px">Selected: 153 words, 766 characters</div>
  <div class="cell" style="width:46px"></div>
  <div class="cell" style="width:233px">Default Page Style</div>
  <div class="cell justify-content-center ps-0" style="width:254px">Dutch (Belgium)</div>
  <div class="cell" style="width:69px"></div>
  <div class="cell" style="width:46px"><svg width="28" height="16"><rect x="1.600" y="3.600" width="16" height="9" class="b" stroke-width="1.200"/><path d="M21 .5h7M21 15.500h7M24.500.5v15"/></svg></div>
  <div class="cell" style="width:30px"></div>
  <div class="cell flex-fill"></div>
  <div class="cell ps-2" style="width:88px;gap:6px">
    <svg width="12" height="16" viewBox="0 0 16 20" preserveAspectRatio="none"><use href="#sheet"/></svg>
    <svg width="25" height="16"><path d="M0 0h8l4 4v12H0zM13 0h8l4 4v12H13z" fill="#0063b1" stroke="none"/><path d="M8.500 0v4H12M21.500 0v4H25" stroke="#fff"/></svg>
    <svg width="25" height="16"><path d="M.5 4.500L4.500.5h8v15H.5zM12.500.5h8l4 4v11h-12zM4.500.5v4h-4M20.500.5v4h4" class="fw"/></svg>
  </div>
  <div class="cell" style="width:144px"><button aria-label="Zoom out"><svg width="10" height="10"><path d="M0 5h10" stroke-width="2"/></svg></button><div class="zoomer"><input type="range" min="0" max="100" value="43" aria-label="Zoom"></div><button aria-label="Zoom in"><svg width="10" height="10"><path d="M0 5h10M5 0v10" stroke-width="2"/></svg></button></div>
  <div class="cell border-0" style="width:53px;padding-left:12px">90%</div>
</footer>
<script src="https://cdn.jsdelivr.net/npm/bootstrap@5.3.0/dist/js/bootstrap.bundle.min.js"></script>
</body>
</html>
